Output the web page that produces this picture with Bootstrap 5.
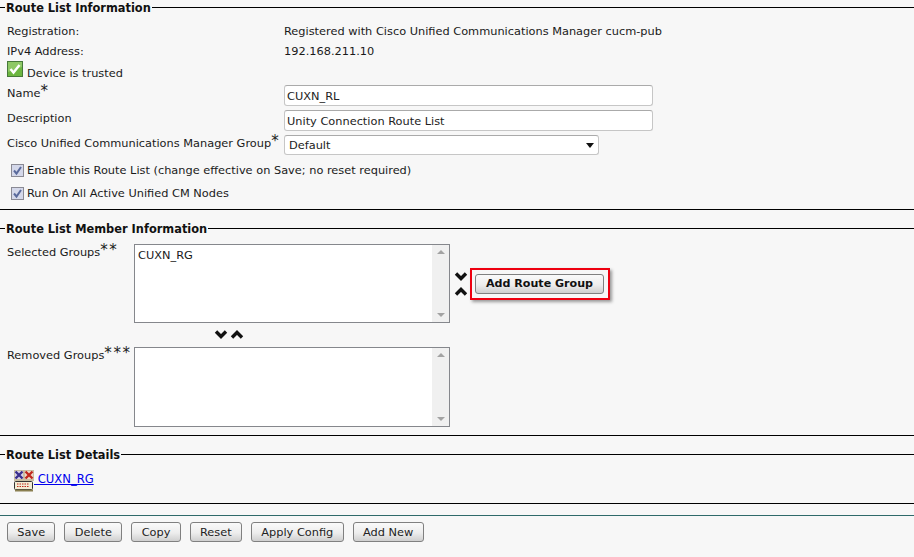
<!DOCTYPE html>
<html lang="en">

<head>
    <meta charset="UTF-8">
    <title>Route List Configuration</title>
    <link href="https://cdn.jsdelivr.net/npm/bootstrap@5.3.3/dist/css/bootstrap.min.css" rel="stylesheet">
    <style>
        body {
            background: #f7f7f7;
            color: #1a1a1a;
            font-family: "DejaVu Sans", Verdana, sans-serif;
            font-size: 11.35px;
            line-height: 14px;
            height: 557px;
            overflow: hidden;
        }

        .cm-section { border-bottom: 1px solid #000; }
        .cm-info { height: 210px; padding-top: 1px; }
        .cm-member { height: 226px; padding-top: 12px; }
        .cm-details { height: 68px; padding-top: 12px; }

        .cm-legend { height: 13px; align-items: center; }
        .cm-legend b { color: #111; font-size: 11.4px; padding: 0 1px; margin-left: 5px; }
        .cm-legend::before { content: ""; position: absolute; width: 5px; border-top: 1px solid #000; }
        .cm-legend i { flex: 1; border-top: 1px solid #000; }

        .cm-row { padding-left: 7px; padding-top: 4px; }
        .cm-row-first { padding-top: 10px; }
        .cm-row-addr { padding-top: 6px; }
        .cm-row-trust { padding-top: 3px; height: 22px; }
        .cm-row-name { padding-top: 5px; }
        .cm-row-enable { padding-top: 8px; }
        .cm-row-run { padding-top: 9px; }
        .cm-row-list { padding-top: 9px; }
        .cm-row-bare { padding-top: 0; }

        .cm-key { width: 277px; flex: none; padding-top: 1px; }
        .cm-key-flat { padding-top: 0; }
        .cm-key-short { width: 127px; flex: none; padding-top: 1px; }
        .cm-star { font-size: 15px; vertical-align: 1px; line-height: 0; letter-spacing: 1.6px; }

        .cm-trust-icon { flex: none; margin-right: 4px; }
        .cm-trust-text { padding-top: 5px; }

        .cm-field {
            height: 21px;
            width: 369px;
            border: 1px solid #c6c6c6;
            border-top-color: #aaa;
            border-radius: 3px;
            background: #fff;
            padding: 0 2px;
            display: flex;
            align-items: center;
            color: #222;
        }
        .cm-select { width: 315px; height: 20px; padding: 0 4px; justify-content: space-between; }
        .cm-caret { border: 4px solid transparent; border-top: 5px solid #111; border-bottom: 0; }

        .cm-check {
            width: 13px; height: 13px; flex: none;
            margin: 0 3px 0 4px;
        }

        .cm-listbox {
            width: 316px;
            background: #fff;
            border: 1px solid #85878c;
            display: flex;
            justify-content: space-between;
        }
        .cm-listbox-a { height: 79px; }
        .cm-listbox-b { height: 80px; }
        .cm-listbox span { padding: 3px; }
        .cm-scroll {
            width: 17px;
            background: #f0f0f0;
            display: flex;
            flex-direction: column;
            justify-content: space-between;
            align-items: center;
            padding: 5px 0;
        }
        .cm-up { border: 4px solid transparent; border-bottom: 4px solid #a3a3a3; border-top: 0; }
        .cm-down { border: 4px solid transparent; border-top: 4px solid #a3a3a3; border-bottom: 0; }

        .cm-arrows-v { gap: 6px; padding-top: 1px; }
        .cm-arrows-h { gap: 2px; padding: 7px 0 4px 214px; height: 24px; }

        .cm-btn {
            height: 20px;
            border: 1px solid #808080;
            border-radius: 3px;
            background: linear-gradient(#fafafa, #ededed 55%, #cfcfcf);
            padding: 0 9.3px;
            color: #222;
            font-size: 11.35px;
            line-height: 18px;
        }
        .cm-callout {
            border: 2px solid #ee0010;
            padding: 4px 4px 4px 3px;
            margin-left: 2px;
            box-shadow: 2px 2px 3px #999;
        }
        .cm-callout .cm-btn { font-weight: 700; font-size: 11.1px; color: #111; width: 129px; padding: 0; }

        .cm-detail-row { padding: 9px 0 0 14px; }
        .cm-link { color: #0000ee; font-size: 11.6px; padding-top: 2px; }
        .cm-teal { border-top: 1px solid #2f6a6a; margin-top: 11px; }
        .cm-toolbar { padding: 6px 0 0 7px; gap: 9px; }
    </style>
</head>

<body>
    <!-- Route List Information -->
    <section class="cm-section cm-info">
        <div class="cm-legend d-flex"><b>Route List Information</b><i></i></div>
        <div class="cm-row cm-row-first d-flex"><div class="cm-key cm-key-flat">Registration:</div><div>Registered with Cisco Unified Communications Manager cucm-pub</div></div>
        <div class="cm-row cm-row-addr d-flex"><div class="cm-key cm-key-flat">IPv4 Address:</div><div>192.168.211.10</div></div>
        <div class="cm-row cm-row-trust d-flex align-items-start">
            <svg width="16" height="16" viewBox="0 0 16 16" class="cm-trust-icon">
                <rect x=".5" y=".5" width="15" height="15" fill="#6cb640" stroke="#47793a"/>
                <path d="M1 1h14v5L1 11z" fill="#a5d47f" opacity=".6"/>
                <path d="M3.5 8l3 3.5L12.5 4" fill="none" stroke="#fff" stroke-width="2.4"/>
            </svg>
            <span class="cm-trust-text">Device is trusted</span>
        </div>
        <div class="cm-row cm-row-name d-flex"><div class="cm-key">Name<span class="cm-star">*</span></div><div class="cm-field">CUXN_RL</div></div>
        <div class="cm-row d-flex"><div class="cm-key">Description</div><div class="cm-field">Unity Connection Route List</div></div>
        <div class="cm-row d-flex"><div class="cm-key">Cisco Unified Communications Manager Group<span class="cm-star">*</span></div><div class="cm-field cm-select"><span>Default</span><span class="cm-caret"></span></div></div>
        <div class="cm-row cm-row-enable d-flex align-items-center">
            <svg class="cm-check" viewBox="0 0 13 13"><rect x=".5" y=".5" width="12" height="12" fill="#d4d8ea" stroke="#8a8a94"/><path d="M3 6.5l2.5 3L10 3" fill="none" stroke="#5a6a9c" stroke-width="2"/></svg>
            <span>Enable this Route List (change effective on Save; no reset required)</span>
        </div>
        <div class="cm-row cm-row-run d-flex align-items-center">
            <svg class="cm-check" viewBox="0 0 13 13"><rect x=".5" y=".5" width="12" height="12" fill="#d4d8ea" stroke="#8a8a94"/><path d="M3 6.5l2.5 3L10 3" fill="none" stroke="#5a6a9c" stroke-width="2"/></svg>
            <span>Run On All Active Unified CM Nodes</span>
        </div>
    </section>

    <!-- Route List Member Information -->
    <section class="cm-section cm-member">
        <div class="cm-legend d-flex"><b>Route List Member Information</b><i></i></div>
        <div class="cm-row cm-row-list d-flex">
            <div class="cm-key-short">Selected Groups<span class="cm-star">**</span></div>
            <div class="cm-listbox cm-listbox-a"><span>CUXN_RG</span><div class="cm-scroll"><i class="cm-up"></i><i class="cm-down"></i></div></div>
            <div class="cm-arrows-v d-flex flex-column justify-content-center ms-1">
                <svg width="14" height="9" viewBox="0 0 14 9"><path d="M2 1.5l5 5 5-5" fill="none" stroke="#111" stroke-width="3.4"/></svg>
                <svg width="14" height="9" viewBox="0 0 14 9"><path d="M2 7.5l5-5 5 5" fill="none" stroke="#111" stroke-width="3.4"/></svg>
            </div>
            <div class="cm-callout align-self-center d-flex"><button class="cm-btn">Add Route Group</button></div>
        </div>
        <div class="cm-arrows-h d-flex">
            <svg width="14" height="9" viewBox="0 0 14 9"><path d="M2 1.5l5 5 5-5" fill="none" stroke="#111" stroke-width="3.4"/></svg>
            <svg width="14" height="9" viewBox="0 0 14 9"><path d="M2 7.5l5-5 5 5" fill="none" stroke="#111" stroke-width="3.4"/></svg>
        </div>
        <div class="cm-row cm-row-bare d-flex">
            <div class="cm-key-short">Removed Groups<span class="cm-star">***</span></div>
            <div class="cm-listbox cm-listbox-b"><span></span><div class="cm-scroll"><i class="cm-up"></i><i class="cm-down"></i></div></div>
        </div>
    </section>

    <!-- Route List Details -->
    <section class="cm-section cm-details">
        <div class="cm-legend d-flex"><b>Route List Details</b><i></i></div>
        <div class="cm-detail-row d-flex">
            <svg width="20" height="22" viewBox="0 0 20 22">
                <rect width="20" height="11" fill="#c9bfa2"/>
                <rect x="1" y="1" width="8" height="8" fill="#d8d2e8"/>
                <rect x="11" y="1" width="8" height="8" fill="#eed8c8"/>
                <path d="M1.5 1.5l7 7M8.5 1.5l-7 7" stroke="#3a2f8c" stroke-width="2.4"/>
                <path d="M11.5 1.5l7 7M18.5 1.5l-7 7" stroke="#c0281c" stroke-width="2.4"/>
                <rect x=".5" y="11.5" width="18" height="8" rx="1" fill="#f2ecd4" stroke="#333"/>
                <path d="M3 14h12M3 16.5h12" stroke="#c0281c" stroke-dasharray="1.5 1"/>
                <path d="M1 20.5h18" stroke="#8a7f50" stroke-width="2"/>
            </svg>
            <a href="#" class="cm-link">&nbsp;CUXN_RG</a>
        </div>
    </section>

    <div class="cm-teal"></div>
    <div class="cm-toolbar d-flex">
        <button class="cm-btn">Save</button>
        <button class="cm-btn">Delete</button>
        <button class="cm-btn">Copy</button>
        <button class="cm-btn">Reset</button>
        <button class="cm-btn">Apply Config</button>
        <button class="cm-btn">Add New</button>
    </div>

    <script src="https://cdn.jsdelivr.net/npm/bootstrap@5.3.3/dist/js/bootstrap.bundle.min.js"></script>
</body>

</html>
